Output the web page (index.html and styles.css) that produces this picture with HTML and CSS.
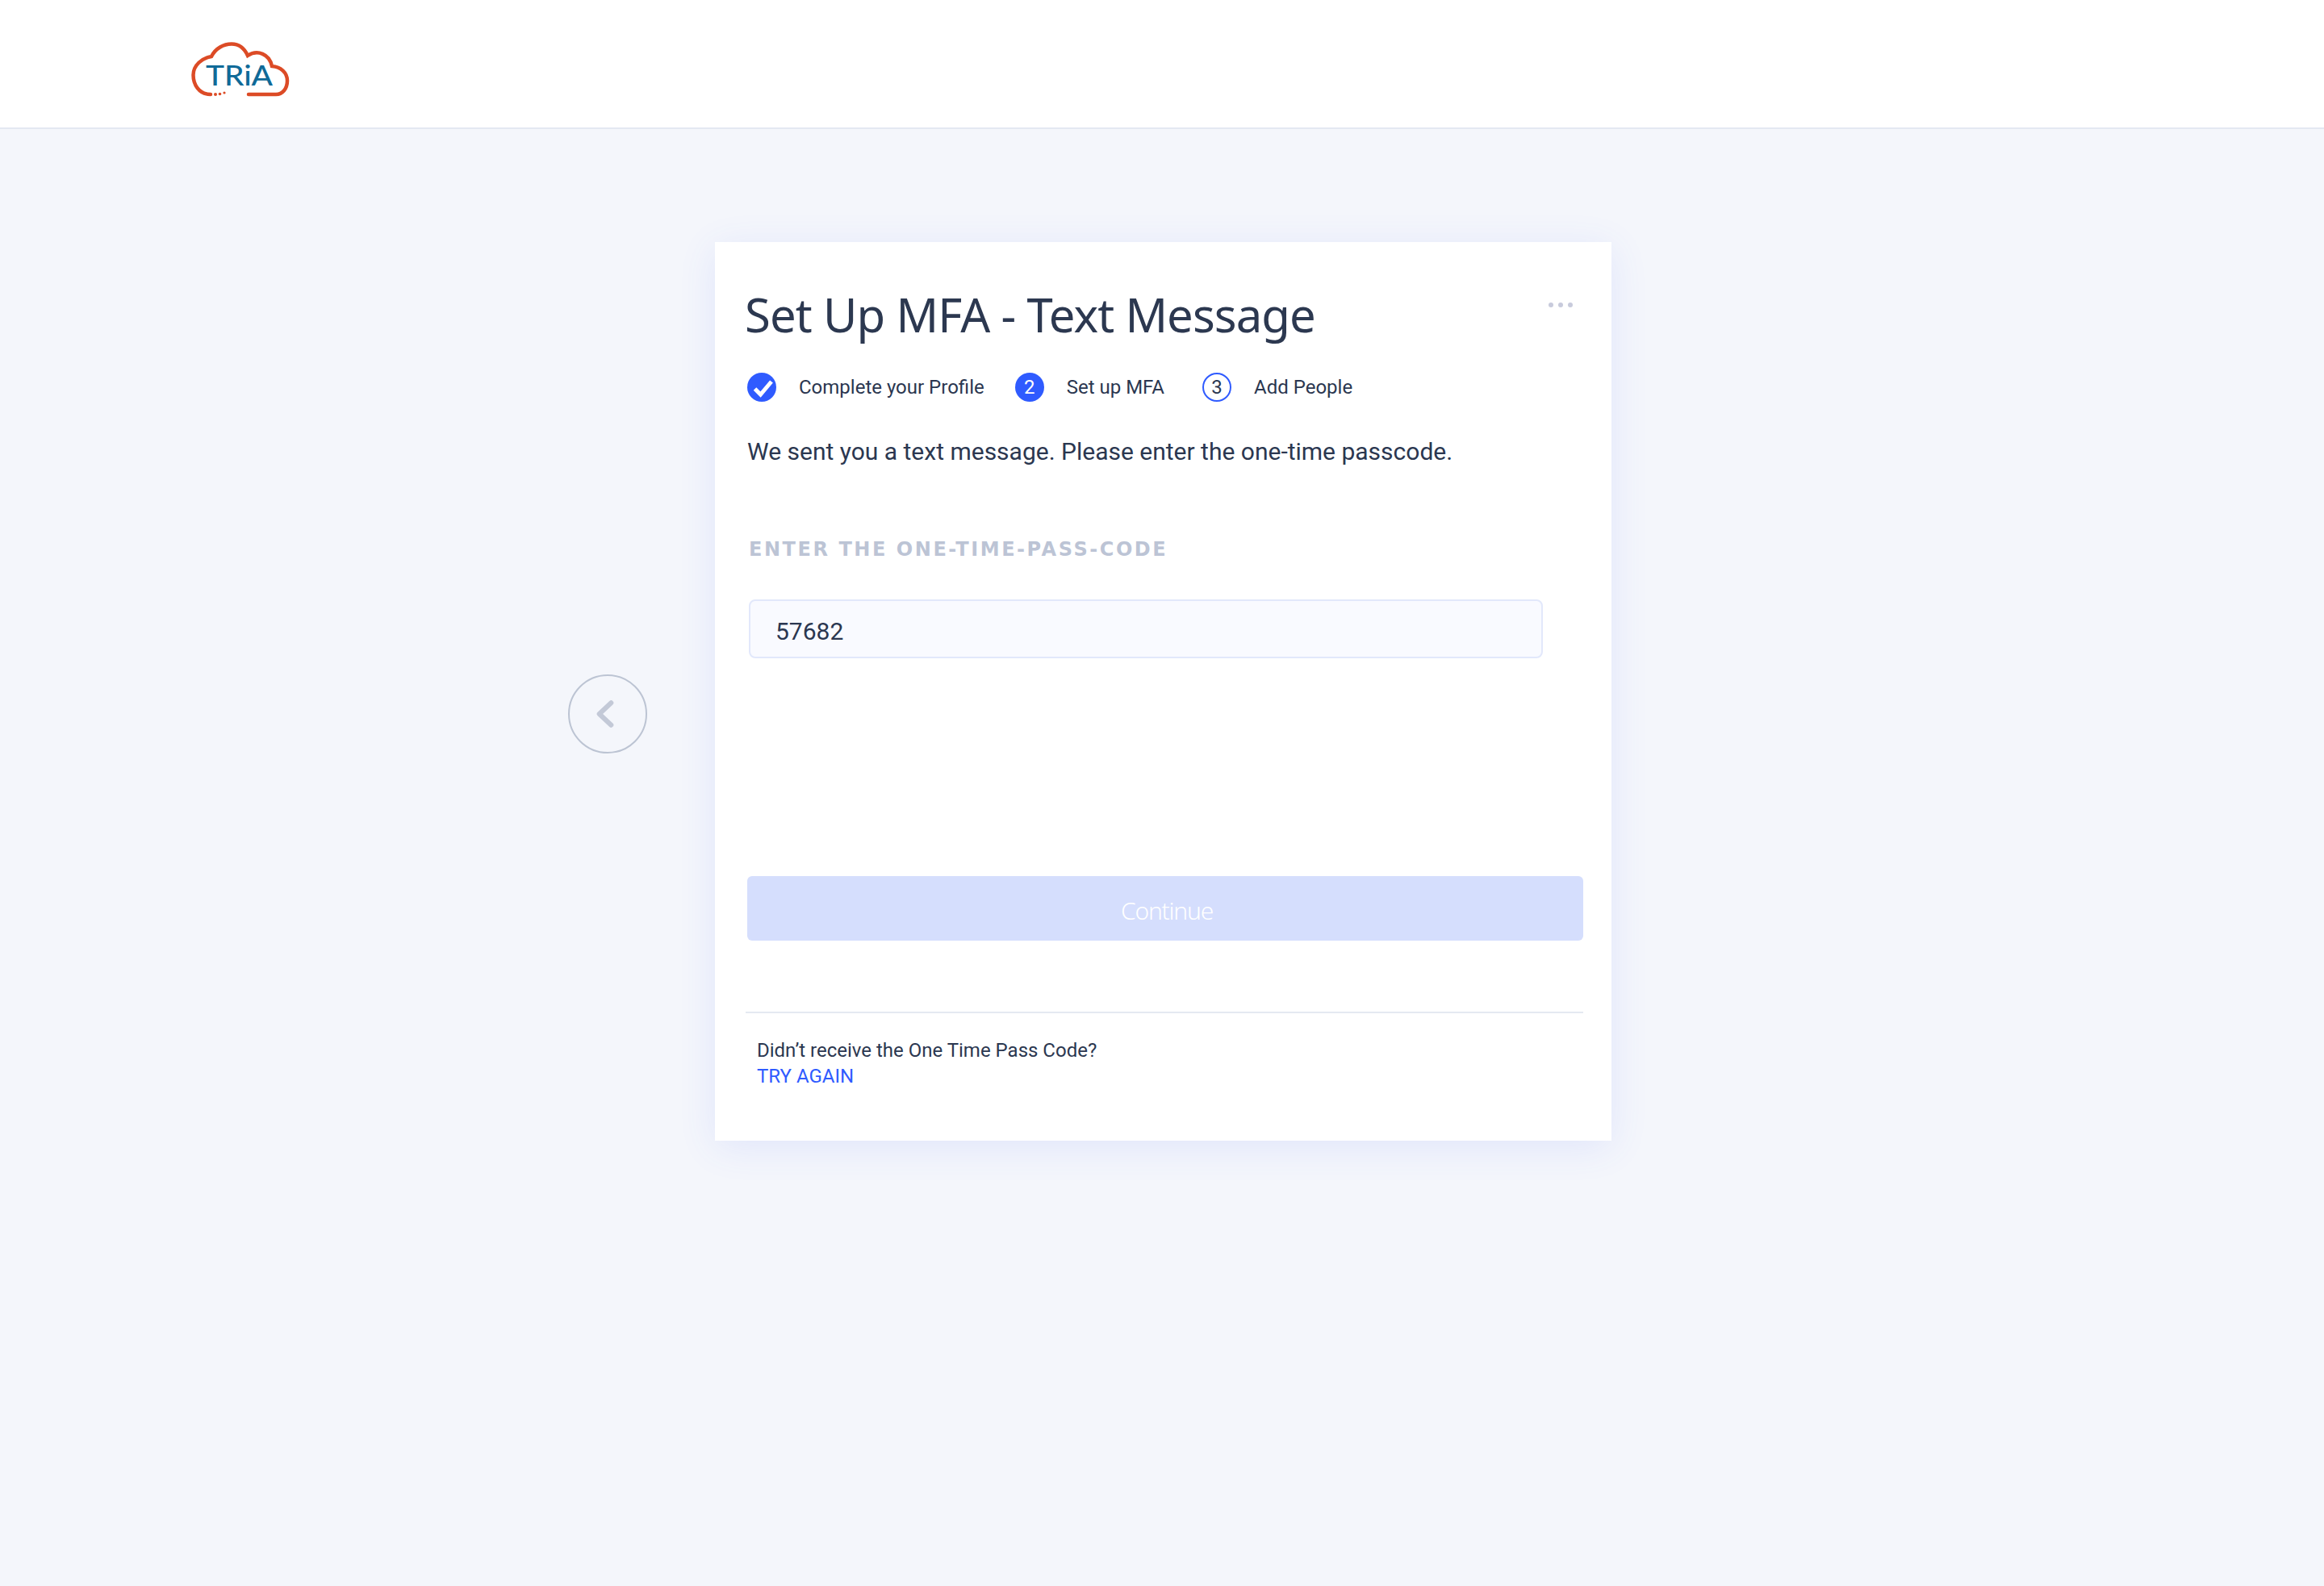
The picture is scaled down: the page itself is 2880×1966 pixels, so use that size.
FILE: index.html
```html
<!DOCTYPE html>
<html lang="en">
<head>
    <meta charset="UTF-8">
    <meta name="viewport" content="width=device-width, initial-scale=1.0">
    <title>Set Up MFA - Text Message</title>
    <link rel="stylesheet" href="styles.css">
</head>
<body>
    <header class="top-bar">
        <svg class="logo" viewBox="0 0 122 68" width="122" height="68">
            <path class="logo-cloud" d="M24 65 C9 65 2.5 52 2.5 41 C2.5 29 13 20 25 18 C30 8 40 2.5 50 2.5 C59 2.5 66 8 70 17 C82 9 97 15 100 30 C111 31 119 38 119 48 C119 58 113 65 105 65 L71 65"/>
            <circle class="logo-dot" cx="30" cy="65" r="2"/>
            <circle class="logo-dot" cx="35.5" cy="64.5" r="1.8"/>
            <circle class="logo-dot" cx="41" cy="63" r="1.6"/>
            <text class="logo-text" x="18" y="54" textLength="83" lengthAdjust="spacingAndGlyphs">TRiA</text>
        </svg>
    </header>

    <main class="page">
        <div class="back-col">
            <button class="back-btn" aria-label="Back">
                <svg viewBox="0 0 24 36" width="22" height="34">
                    <path d="M20 3 L4 18 L20 33"/>
                </svg>
            </button>
        </div>

        <section class="card">
            <div class="card-head">
                <h1 class="card-title">Set Up MFA - Text Message</h1>
                <div class="more-dots"><span></span><span></span><span></span></div>
            </div>

            <ol class="steps">
                <li class="step">
                    <span class="step-icon filled">
                        <svg viewBox="0 0 36 36" width="36" height="36"><path d="M9.5 20 L16.5 27 L30 11"/></svg>
                    </span>
                    Complete your Profile
                </li>
                <li class="step step-wide">
                    <span class="step-icon filled">2</span>
                    Set up MFA
                </li>
                <li class="step">
                    <span class="step-icon outline">3</span>
                    Add People
                </li>
            </ol>

            <p class="intro">We sent you a text message. Please enter the one-time passcode.</p>

            <label class="field-label" for="otp">ENTER THE ONE-TIME-PASS-CODE</label>
            <input class="field-input" id="otp" type="text" value="57682">

            <button class="continue-btn" disabled>Continue</button>

            <div class="resend">
                <p class="resend-text">Didn’t receive the One Time Pass Code?</p>
                <a class="resend-link" href="#">TRY AGAIN</a>
            </div>
        </section>

        <div class="side-col"></div>
    </main>
</body>
</html>
```

FILE: styles.css
```css
* {
    box-sizing: border-box;
}
body {
    margin: 0;
    min-height: 100vh;
    background: #f4f6fb;
    color: #2b3750;
    font-family: Roboto, "Liberation Sans", sans-serif;
}
.top-bar {
    height: 160px;
    padding: 52px 0 0 237px;
    background: #fff;
    border-bottom: 2px solid #e4e8f2;
}
.logo {
    display: block;
}
.logo-cloud {
    fill: none;
    stroke: #dc4b26;
    stroke-width: 4.5;
    stroke-linecap: round;
}
.logo-dot {
    fill: #dc4b26;
}
.logo-text {
    fill: #0f6a98;
    font-family: Lato, "Open Sans", sans-serif;
    font-size: 34px;
    font-weight: 500;
}
.page {
    display: grid;
    grid-template-columns: 886px 1111px 1fr;
    padding-top: 140px;
}
.back-col {
    display: flex;
    justify-content: flex-end;
    align-items: flex-start;
    padding: 536px 84px 0 0;
}
.back-btn {
    width: 98px;
    height: 98px;
    padding: 0 6px 0 0;
    display: flex;
    justify-content: center;
    align-items: center;
    background: none;
    border: 2px solid #bcc4d3;
    border-radius: 50%;
}
.back-btn path {
    fill: none;
    stroke: #c3c9d7;
    stroke-width: 6.5;
    stroke-linecap: round;
    stroke-linejoin: round;
}
.card {
    height: 1114px;
    padding: 0 35px 0 40px;
    background: #fff;
    box-shadow: 0 8px 44px rgba(70, 100, 255, 0.11);
}
.card-head {
    display: flex;
    justify-content: space-between;
    align-items: flex-start;
}
.card-title {
    margin: 50px 0 0 -3px;
    color: #2c3850;
    font-family: "Noto Sans", sans-serif;
    font-size: 58px;
    font-weight: 400;
    line-height: 80px;
    letter-spacing: -0.9px;
}
.more-dots {
    display: flex;
    gap: 6px;
    margin: 75px 13px 0 0;
}
.more-dots span {
    width: 6px;
    height: 6px;
    border-radius: 50%;
    background: #c8cbdc;
}
.steps {
    display: flex;
    margin: 32px 0 0;
    padding: 0;
    list-style: none;
}
.step {
    display: flex;
    align-items: center;
    gap: 28px;
    margin-right: 38px;
    font-size: 24px;
    line-height: 36px;
}
.step-wide {
    margin-right: 47px;
}
.step-icon {
    width: 36px;
    height: 36px;
    display: flex;
    justify-content: center;
    align-items: center;
    border-radius: 50%;
    font-size: 24px;
}
.step-icon.filled {
    background: #2f5bff;
    color: #fff;
}
.step-icon.outline {
    border: 2px solid #2f5bff;
    color: #2b3750;
}
.step-icon path {
    fill: none;
    stroke: #fff;
    stroke-width: 5;
}
.intro {
    margin: 44px 0 0;
    font-size: 30px;
    line-height: 36px;
}
.field-label {
    display: block;
    margin: 87px 0 0 2px;
    color: #bcc4d5;
    font-family: "DejaVu Sans", sans-serif;
    font-size: 24px;
    font-weight: 700;
    line-height: 32px;
    letter-spacing: 2.55px;
}
.field-input {
    display: block;
    width: 984px;
    height: 73px;
    margin: 46px 0 0 2px;
    padding: 6px 31px 0;
    background: #f9faff;
    border: 2px solid #e2e8fb;
    border-radius: 8px;
    color: #2b3750;
    font-family: Roboto, sans-serif;
    font-size: 30px;
}
.continue-btn {
    display: block;
    width: 1036px;
    height: 80px;
    margin-top: 270px;
    padding: 4px 0 0 4px;
    background: #d5defd;
    border: none;
    border-radius: 6px;
    color: #fff;
    font-family: "Noto Sans", sans-serif;
    font-size: 30px;
    font-weight: 300;
    letter-spacing: -1.2px;
}
.resend {
    margin: 88px 0 0 -2px;
    padding: 30px 14px 0;
    border-top: 2px solid #e5e9f1;
}
.resend-text {
    margin: 0;
    font-size: 24px;
    line-height: 32px;
}
.resend-link {
    display: block;
    color: #2f5bff;
    font-size: 24px;
    line-height: 32px;
    text-decoration: none;
}
```
